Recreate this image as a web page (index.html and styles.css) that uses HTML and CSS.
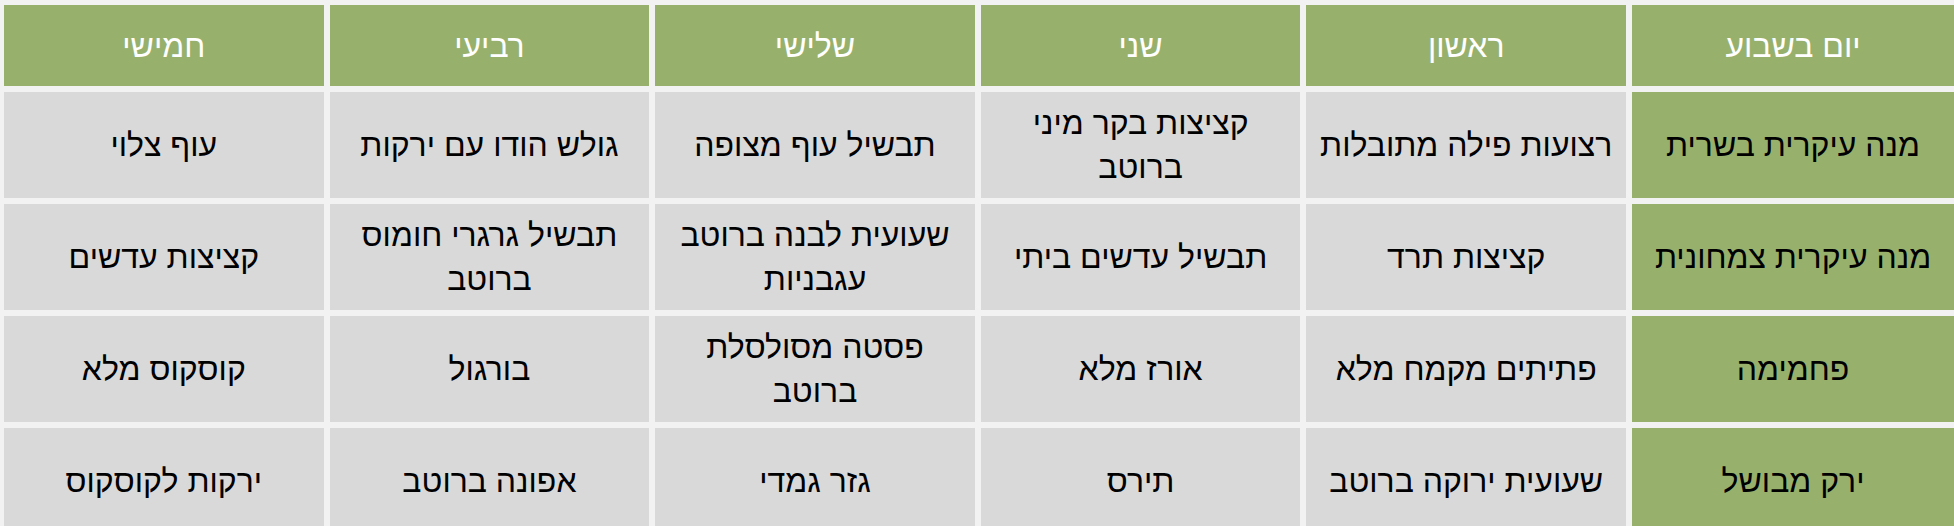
FILE: index.html
```html
<!DOCTYPE html>
<html lang="he" dir="rtl">
<head>
<meta charset="utf-8">
<link rel="stylesheet" href="styles.css">
</head>
<body>
<div class="menu">
  <div class="cell head">יום בשבוע</div>
  <div class="cell head">ראשון</div>
  <div class="cell head">שני</div>
  <div class="cell head">שלישי</div>
  <div class="cell head">רביעי</div>
  <div class="cell head">חמישי</div>

  <div class="cell label">מנה עיקרית בשרית</div>
  <div class="cell">רצועות פילה מתובלות</div>
  <div class="cell">קציצות בקר מיני<br>ברוטב</div>
  <div class="cell">תבשיל עוף מצופה</div>
  <div class="cell">גולש הודו עם ירקות</div>
  <div class="cell">עוף צלוי</div>

  <div class="cell label">מנה עיקרית צמחונית</div>
  <div class="cell">קציצות תרד</div>
  <div class="cell">תבשיל עדשים ביתי</div>
  <div class="cell">שעועית לבנה ברוטב<br>עגבניות</div>
  <div class="cell">תבשיל גרגרי חומוס<br>ברוטב</div>
  <div class="cell">קציצות עדשים</div>

  <div class="cell label">פחמימה</div>
  <div class="cell">פתיתים מקמח מלא</div>
  <div class="cell">אורז מלא</div>
  <div class="cell">פסטה מסולסלת<br>ברוטב</div>
  <div class="cell">בורגול</div>
  <div class="cell">קוסקוס מלא</div>

  <div class="cell label">ירק מבושל</div>
  <div class="cell">שעועית ירוקה ברוטב</div>
  <div class="cell">תירס</div>
  <div class="cell">גזר גמדי</div>
  <div class="cell">אפונה ברוטב</div>
  <div class="cell">ירקות לקוסקוס</div>
</div>
</body>
</html>
```
FILE: styles.css
```css
html, body {
  margin: 0;
  padding: 0;
  background: #f2f2f2;
  overflow: hidden;
}

.menu {
  direction: rtl;
  width: 1950px;
  padding-top: 5px;
  display: grid;
  grid-template-columns: 322px repeat(5, 1fr);
  grid-template-rows: 81px repeat(4, 106px);
  gap: 6px;
  font-family: "Liberation Sans", "DejaVu Sans", sans-serif;
  font-size: 32px;
  line-height: 44px;
  color: #000;
}

.cell {
  background: #d9d9d9;
  display: flex;
  align-items: center;
  justify-content: center;
  text-align: center;
  white-space: nowrap;
  padding: 0 2px;
}

.head {
  background: #97b16c;
  color: #fff;
}

.label {
  background: #97b16c;
}
```
